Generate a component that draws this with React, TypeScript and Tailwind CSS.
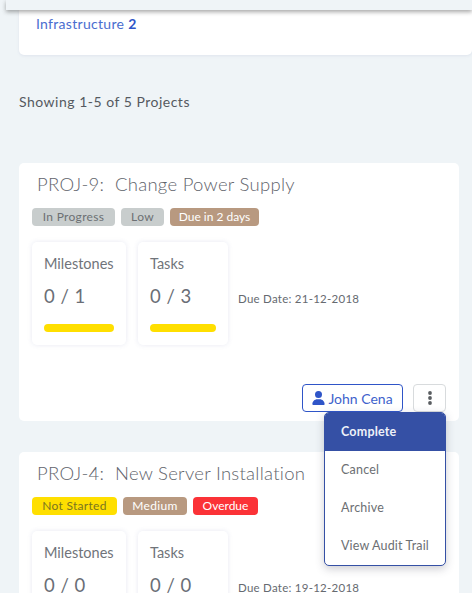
import React from 'react';

const Badge = ({ label, className }: { label: string; className: string }) => (
  <span className={`h-[18px] rounded-[4px] text-center text-[12px] leading-[18px] ${className}`}>{label}</span>
);

const StatCard = ({ title, value, width, barWidth }: { title: string; value: string; width: string; barWidth: string }) => (
  <div className={`h-[103px] rounded-[5px] bg-white pl-[12px] pt-[12px] shadow-[0_0_5px_rgba(90,100,160,0.14)] ${width}`}>
    <div className="text-[14.5px] leading-[20px] text-[#70747a]">{title}</div>
    <div className="mt-[10px] text-[18.5px] leading-[24px] tracking-[0.5px] text-[#6a6e76]">{value}</div>
    <div className={`mt-[16px] h-2 rounded-full bg-[#ffdf00] ${barWidth}`} />
  </div>
);

const ProjectCard = ({
  title,
  badges,
  milestones,
  tasks,
  due,
  children,
}: {
  title: string;
  badges: React.ReactNode;
  milestones: string;
  tasks: string;
  due: string;
  children?: React.ReactNode;
}) => (
  <div className="relative mr-[13px] h-[258px] rounded-[5px] bg-white pl-[13px] pt-[11px]">
    <h3 className="ml-[5px] text-[18.5px] leading-[21px] font-light tracking-[0.28px] whitespace-pre text-[#5f646c]">{title}</h3>
    <div className="mt-[13px] flex gap-[6px]">{badges}</div>
    <div className="mt-[16px] flex items-center gap-[12px]">
      <StatCard title="Milestones" value={milestones} width="w-[94px]" barWidth="w-[70px]" />
      <StatCard title="Tasks" value={tasks} width="w-[90px]" barWidth="w-[66px]" />
      <span className="mt-[10px] -ml-[2px] text-[11.5px] tracking-[0.25px] text-[#666a70]">Due Date: {due}</span>
    </div>
    {children}
  </div>
);

export default function App() {
  return (
    <div className="relative h-[593px] w-[472px] overflow-hidden bg-[#eff4f7] font-['Lato','Noto_Sans',sans-serif]">
      <div className="pt-[10px] pl-[19px]">
        <div className="h-[45px] rounded-b-[5px] bg-white pl-[17px] pt-[4px] text-[14px] leading-[20px] tracking-[0.3px] text-[#4a6dcf] shadow-[0_1px_3px_rgba(90,100,160,0.1)]">
          Infrastructure <b className="font-bold text-[#2f55c8]">2</b>
        </div>
        <p className="mt-[37px] text-[14px] leading-[20px] tracking-[0.5px] text-[#55595f]">Showing 1-5 of 5 Projects</p>
        <div className="mt-[51px] flex flex-col gap-[31px]">
          <ProjectCard
            title="PROJ-9:  Change Power Supply"
            milestones="0 / 1"
            tasks="0 / 3"
            due="21-12-2018"
            badges={
              <>
                <Badge label="In Progress" className="w-[83px] bg-[#c8cdcd] tracking-[0.3px] text-[#6c7073]" />
                <Badge label="Low" className="w-[43px] bg-[#c8cdcd] tracking-[0.3px] text-[#6c7073]" />
                <Badge label="Due in 2 days" className="w-[89px] bg-[#b89980] text-white" />
              </>
            }
          >
            <div className="absolute top-[221px] right-[13px] flex gap-[10px]">
              <button className="flex h-[28px] w-[101px] items-center justify-center gap-[3px] rounded-[4px] border border-[#2f55c8] bg-white text-[14px] text-[#4062cc]">
                <svg viewBox="0 0 448 512" className="h-[14px] w-[13px]" fill="#2f55c8">
                  <path d="M224 256a128 128 0 1 0 0-256 128 128 0 1 0 0 256zm-45.7 48C79.8 304 0 383.8 0 482.3 0 498.7 13.3 512 29.7 512h388.6c16.4 0 29.7-13.3 29.7-29.7C448 383.8 368.2 304 269.7 304h-91.4z" />
                </svg>
                John Cena
              </button>
              <button className="flex h-[28px] w-[33px] items-center justify-center rounded-[4px] border border-[#d8dbdd] bg-white">
                <svg viewBox="0 0 4 14" className="h-[14px] w-[4px]" fill="#5a5d61">
                  <circle cx="2" cy="2" r="1.9" />
                  <circle cx="2" cy="7" r="1.9" />
                  <circle cx="2" cy="12" r="1.9" />
                </svg>
              </button>
            </div>
          </ProjectCard>
          <ProjectCard
            title="PROJ-4:  New Server Installation"
            milestones="0 / 0"
            tasks="0 / 0"
            due="19-12-2018"
            badges={
              <>
                <Badge label="Not Started" className="w-[85px] bg-[#ffdf00] tracking-[0.3px] text-[#7a7520]" />
                <Badge label="Medium" className="w-[64px] bg-[#b89980] tracking-[0.3px] text-white" />
                <Badge label="Overdue" className="w-[65px] bg-[#fb3237] text-white" />
              </>
            }
          />
        </div>
      </div>

      {/* top bar shadow */}
      <div className="absolute top-0 right-0 left-[6px] h-[10px] bg-[#eff4f7] shadow-[0_2px_4px_rgba(60,60,60,0.45)]" />

      {/* dropdown */}
      <div className="absolute top-[412px] left-[324px] w-[122px] overflow-hidden rounded-[5px] border border-[#3550a5] bg-white text-[12.5px] text-[#6c6f73] shadow-[0_3px_8px_rgba(60,60,80,0.25)]">
        <div className="flex h-[38px] items-center bg-[#3550a5] pl-[16px] font-bold tracking-[0.2px] text-[#eef1f8]">Complete</div>
        <div className="flex h-[38px] items-center pl-[16px] tracking-[0.2px]">Cancel</div>
        <div className="flex h-[38px] items-center pl-[16px] tracking-[0.2px]">Archive</div>
        <div className="flex h-[38px] items-center pl-[16px] tracking-[0.15px]">View Audit Trail</div>
      </div>
    </div>
  );
}
